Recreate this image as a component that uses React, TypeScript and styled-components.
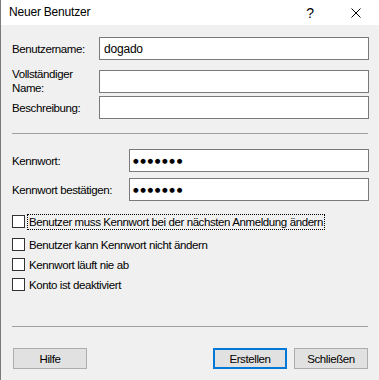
import React from 'react';
import styled, { createGlobalStyle } from 'styled-components';

const GlobalStyle = createGlobalStyle`
  html, body {
    margin: 0;
    padding: 0;
    background: #f0f0f0;
  }
  * {
    box-sizing: border-box;
  }
`;

const Window = styled.div`
  width: 379px;
  height: 380px;
  display: flex;
  flex-direction: column;
  border-left: 1px solid #7a7a7a;
  background: #f0f0f0;
  font-family: 'Liberation Sans', Arial, sans-serif;
  font-size: 11.5px;
  letter-spacing: -0.4px;
  color: #000;
  overflow: hidden;
`;

const TitleBar = styled.div`
  height: 25px;
  background: #fff;
  display: flex;
  align-items: center;
  padding-left: 8px;
  flex-shrink: 0;
`;

const Title = styled.div`
  flex: 1;
  font-size: 12px;
  letter-spacing: -0.2px;
  padding-bottom: 1px;
`;

const TitleButton = styled.div`
  width: 46px;
  height: 25px;
  display: flex;
  align-items: center;
  justify-content: center;
  font-size: 14px;
`;

const Body = styled.div`
  flex: 1;
  padding: 12px 10px 0 11px;
  display: flex;
  flex-direction: column;
`;

const FieldRow = styled.div<{ $top?: number; $labelWidth: number }>`
  display: grid;
  grid-template-columns: ${p => p.$labelWidth}px 1fr;
  align-items: center;
  height: 23px;
  margin-top: ${p => p.$top ?? 0}px;
`;

const Label = styled.label`
  line-height: 14px;
`;

const TextBox = styled.div`
  height: 23px;
  background: #fff;
  border: 1px solid #7a7a7a;
  padding: 0 4px;
  display: flex;
  align-items: center;
  font-size: 12px;
  letter-spacing: -0.2px;
`;

const Dots = styled.span`
  font-family: 'DejaVu Sans', sans-serif;
  font-size: 6.5px;
  letter-spacing: 1.6px;
  margin-left: -1px;
`;

const Separator = styled.div<{ $top: number }>`
  height: 1px;
  background: #a0a0a0;
  margin-top: ${p => p.$top}px;
  margin-right: 1px;
`;

const CheckRow = styled.div<{ $top: number }>`
  display: flex;
  align-items: center;
  height: 13px;
  margin-top: ${p => p.$top}px;
`;

const Box = styled.span`
  width: 13px;
  height: 13px;
  background: #fff;
  border: 1px solid #333;
  flex-shrink: 0;
`;

const CheckLabel = styled.span<{ $focused?: boolean }>`
  margin-left: 3px;
  padding: 0 1px;
  line-height: 14px;
  outline: ${p => (p.$focused ? '1px dotted #000' : 'none')};
  outline-offset: 0;
`;

const ButtonBar = styled.div`
  display: flex;
  margin-top: 21px;
  padding-left: 1px;
  padding-right: 1px;
`;

const Button = styled.div<{ $primary?: boolean }>`
  width: 74px;
  height: 21px;
  background: #e1e1e1;
  border: ${p => (p.$primary ? '2px solid #0078d7' : '1px solid #adadad')};
  display: flex;
  align-items: center;
  justify-content: center;
`;

const Spacer = styled.div`
  flex: 1;
`;

const ButtonGap = styled.div`
  width: 7px;
`;

export default function App() {
  return (
    <>
      <GlobalStyle />
      <Window>
        <TitleBar>
          <Title>Neuer Benutzer</Title>
          <TitleButton>?</TitleButton>
          <TitleButton>
            <svg width="10" height="10" viewBox="0 0 10 10">
              <path d="M0.5 0.5 L9.5 9.5 M9.5 0.5 L0.5 9.5" stroke="#000" strokeWidth="1" fill="none" />
            </svg>
          </TitleButton>
        </TitleBar>
        <Body>
          <FieldRow $labelWidth={87}>
            <Label>Benutzername:</Label>
            <TextBox>dogado</TextBox>
          </FieldRow>
          <FieldRow $labelWidth={87} $top={7}>
            <Label>
              Vollständiger
              <br />
              Name:
            </Label>
            <TextBox />
          </FieldRow>
          <FieldRow $labelWidth={87} $top={6}>
            <Label>Beschreibung:</Label>
            <TextBox />
          </FieldRow>
          <Separator $top={14} />
          <FieldRow $labelWidth={117} $top={15}>
            <Label>Kennwort:</Label>
            <TextBox>
              <Dots>●●●●●●●</Dots>
            </TextBox>
          </FieldRow>
          <FieldRow $labelWidth={117} $top={6}>
            <Label>Kennwort bestätigen:</Label>
            <TextBox>
              <Dots>●●●●●●●</Dots>
            </TextBox>
          </FieldRow>
          <CheckRow $top={14}>
            <Box />
            <CheckLabel $focused>Benutzer muss Kennwort bei der nächsten Anmeldung ändern</CheckLabel>
          </CheckRow>
          <CheckRow $top={10}>
            <Box />
            <CheckLabel>Benutzer kann Kennwort nicht ändern</CheckLabel>
          </CheckRow>
          <CheckRow $top={7}>
            <Box />
            <CheckLabel>Kennwort läuft nie ab</CheckLabel>
          </CheckRow>
          <CheckRow $top={7}>
            <Box />
            <CheckLabel>Konto ist deaktiviert</CheckLabel>
          </CheckRow>
          <Separator $top={35} />
          <ButtonBar>
            <Button>Hilfe</Button>
            <Spacer />
            <Button $primary>Erstellen</Button>
            <ButtonGap />
            <Button>Schließen</Button>
          </ButtonBar>
        </Body>
      </Window>
    </>
  );
}
